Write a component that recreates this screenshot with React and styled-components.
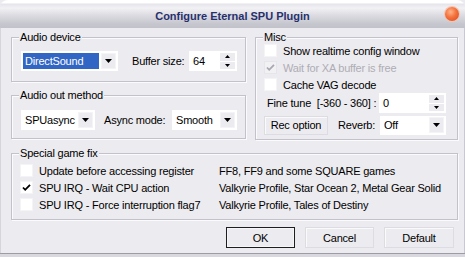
import { createGlobalStyle, styled } from "styled-components";

const Global = createGlobalStyle`
    html, body {
        margin: 0;
        padding: 0;
        background: #ffffff;
    }
    * {
        box-sizing: border-box;
    }
`

const Window = styled.div`
    width: 465px;
    height: 257px;
    display: flex;
    flex-direction: column;
    background: #ecebef;
    font-family: "Liberation Sans", Arial, sans-serif;
    font-size: 11px;
    letter-spacing: -0.2px;
    color: #000;
    overflow: hidden;
`

const TitleBar = styled.div`
    height: 28px;
    display: flex;
    align-items: center;
    justify-content: center;
    position: relative;
    padding-top: 3px;
    background: linear-gradient(#ffffff 0px, #ffffff 3px, #e4e4ea 4px, #f2f2f5 8px, #dcdce2 15px, #c6c6ce 24px, #c2c2ca 28px);
    border-radius: 8px 8px 0 0;
`

const Title = styled.span`
    font-weight: bold;
    color: #27306c;
    letter-spacing: 0;
`

const CloseButton = styled.span`
    position: absolute;
    right: 6px;
    top: 7px;
    width: 14px;
    height: 14px;
    border-radius: 50%;
    background: radial-gradient(circle at 40% 35%, #ffb48a 0%, #f3713c 45%, #d9461a 100%);
    box-shadow: 0 0 0 1px #f4c4b0;
`

const Body = styled.div`
    flex: 1;
    display: flex;
    flex-direction: column;
    padding: 9px 7px 0 11px;
    border-bottom: 1px solid #9d9ca6;
    box-shadow: inset 1px 0 0 #d6d5dc, inset -1px 0 0 #c9c8d0;
`

const BottomEdge = styled.div`
    height: 3px;
    background: #d9d8de;
`

const TopRow = styled.div`
    display: flex;
    gap: 9px;
`

const Column = styled.div`
    width: 235px;
    display: flex;
    flex-direction: column;
    gap: 13px;
`

const Group = styled.div`
    position: relative;
    width: ${p => p.$w}px;
    height: ${p => p.$h}px;
    border: 1px solid #c3c2cb;
    box-shadow: inset 1px 1px 0 #fbfbfd, 1px 1px 0 #fbfbfd;
    padding: ${p => p.$pad};
`

const Legend = styled.span`
    position: absolute;
    top: -8px;
    left: 7px;
    padding: 0 1px;
    background: #ecebef;
    line-height: 14px;
`

const Row = styled.div`
    display: flex;
    align-items: center;
    height: ${p => p.$h || 20}px;
    margin-top: ${p => p.$mt || 0}px;
`

const Label = styled.span`
    margin-left: ${p => p.$ml || 0}px;
    white-space: nowrap;
    color: ${p => (p.$disabled ? "#aeadb5" : "#000")};
`

const Combo = styled.div`
    width: ${p => p.$w}px;
    height: ${p => p.$h || 20}px;
    margin-left: ${p => (p.$auto ? "auto" : "0")};
    background: #fff;
    display: flex;
    align-items: center;
    padding: 2px;
    gap: 2px;
`

const ComboText = styled.span`
    flex: 1;
    height: 100%;
    display: flex;
    align-items: center;
    padding-left: 2px;
    background: ${p => (p.$selected ? "#3166c4" : "transparent")};
    color: ${p => (p.$selected ? "#fff" : "#000")};
    white-space: nowrap;
`

const DropButton = styled.span`
    width: 15px;
    height: 16px;
    display: flex;
    align-items: center;
    justify-content: center;
    background: #ecebef;
    border: 1px solid #f4f4f6;
`

const Spin = styled.div`
    width: ${p => p.$w}px;
    height: 20px;
    margin-left: auto;
    background: #fff;
    display: flex;
    align-items: stretch;
    padding: 2px;
`

const SpinText = styled.span`
    flex: 1;
    padding-left: 2px;
    display: flex;
    align-items: center;
`

const SpinArrows = styled.span`
    width: 15px;
    display: flex;
    flex-direction: column;
    gap: 1px;
`

const SpinPart = styled.span`
    flex: 1;
    display: flex;
    align-items: center;
    justify-content: center;
    background: #ecebef;
`

const Box = styled.span`
    width: 13px;
    height: 13px;
    flex: none;
    display: flex;
    align-items: center;
    justify-content: center;
    background: ${p => (p.$disabled ? "#f1f0f3" : "#fff")};
    border: 1px solid ${p => (p.$disabled ? "#e6e5ea" : "#f4f4f6")};
`

const CheckRow = styled.div`
    display: flex;
    align-items: center;
    height: 17px;
    gap: ${p => p.$gap || 6}px;
`

const FixLabel = styled.div`
    width: 193px;
    display: flex;
    align-items: center;
    gap: 6px;
    white-space: nowrap;
`

const Button = styled.button`
    width: ${p => p.$w}px;
    height: ${p => p.$h || 21}px;
    font: inherit;
    letter-spacing: inherit;
    color: #000;
    background: #ecebef;
    border: 1px solid ${p => (p.$focus ? "#1e1e1e" : "#dddce2")};
    box-shadow: ${p => (p.$focus ? "inset 0 0 0 1px #f6f6f8" : "inset 1px 1px 0 #fafafb")};
    padding: 0;
`

const ButtonRow = styled.div`
    display: flex;
    justify-content: flex-end;
    gap: 10px;
    margin-top: 7px;
    padding-right: 4px;
`

const Down = () => (
    <svg width="7" height="4" viewBox="0 0 7 4"><path d="M0 0h7L3.5 4z" fill="#000" /></svg>
)

const Up = () => (
    <svg width="5" height="3" viewBox="0 0 5 3"><path d="M0 3h5L2.5 0z" fill="#000" /></svg>
)

const SmallDown = () => (
    <svg width="5" height="3" viewBox="0 0 5 3"><path d="M0 0h5L2.5 3z" fill="#000" /></svg>
)

const Check = ({ color }) => (
    <svg width="9" height="9" viewBox="0 0 9 9">
        <path d="M1 4.5l2.2 2.3L8 1.8" stroke={color} strokeWidth="1.8" fill="none" />
    </svg>
)

const Checkbox = ({ checked, disabled }) => (
    <Box $disabled={disabled}>
        {checked && <Check color={disabled ? "#a9a8b0" : "#000"} />}
    </Box>
)

const Dropdown = ({ w, value, selected, auto, h }) => (
    <Combo $w={w} $auto={auto} $h={h}>
        <ComboText $selected={selected}>{value}</ComboText>
        <DropButton><Down /></DropButton>
    </Combo>
)

const SpinBox = ({ w, value }) => (
    <Spin $w={w}>
        <SpinText>{value}</SpinText>
        <SpinArrows>
            <SpinPart><Up /></SpinPart>
            <SpinPart><SmallDown /></SpinPart>
        </SpinArrows>
    </Spin>
)

const fixes = [
    { label: "Update before accessing register", games: "FF8, FF9 and some SQUARE games", checked: false },
    { label: "SPU IRQ - Wait CPU action", games: "Valkyrie Profile, Star Ocean 2, Metal Gear Solid", checked: true },
    { label: "SPU IRQ - Force interruption flag7", games: "Valkyrie Profile, Tales of Destiny", checked: false },
]

export default function App() {
    return (
        <>
            <Global />
            <Window>
                <TitleBar>
                    <Title>Configure Eternal SPU Plugin</Title>
                    <CloseButton />
                </TitleBar>

                <Body>
                    <TopRow>
                        <Column>
                            <Group $w={235} $h={45} $pad="13px 8px 0 9px">
                                <Legend>Audio device</Legend>
                                <Row>
                                    <Dropdown w={97} value="DirectSound" selected />
                                    <Label $ml={14}>Buffer size:</Label>
                                    <SpinBox w={48} value="64" />
                                </Row>
                            </Group>

                            <Group $w={235} $h={44} $pad="14px 8px 0 9px">
                                <Legend>Audio out method</Legend>
                                <Row>
                                    <Dropdown w={74} value="SPUasync" />
                                    <Label $ml={9}>Async mode:</Label>
                                    <Dropdown w={65} value="Smooth" auto />
                                </Row>
                            </Group>
                        </Column>

                        <Group $w={203} $h={103} $pad="4px 11px 0 8px">
                            <Legend>Misc</Legend>
                            <CheckRow>
                                <Checkbox />
                                <Label>Show realtime config window</Label>
                            </CheckRow>
                            <CheckRow>
                                <Checkbox checked disabled />
                                <Label $disabled>Wait for XA buffer is free</Label>
                            </CheckRow>
                            <CheckRow>
                                <Checkbox />
                                <Label>Cache VAG decode</Label>
                            </CheckRow>
                            <Row>
                                <Label $ml={3}>Fine tune&nbsp; [-360 - 360] :</Label>
                                <SpinBox w={67} value="0" />
                            </Row>
                            <Row $mt={2}>
                                <Button $w={64} $h={19}>Rec option</Button>
                                <Label $ml={10}>Reverb:</Label>
                                <Dropdown w={66} value="Off" auto h={19} />
                            </Row>
                        </Group>
                    </TopRow>

                    <Group $w={447} $h={67} $pad="8px 8px 0 8px" style={{ marginTop: 13 }}>
                        <Legend>Special game fix</Legend>
                        {fixes.map(f => (
                            <CheckRow key={f.label} $gap={0}>
                                <FixLabel>
                                    <Checkbox checked={f.checked} />
                                    <span>{f.label}</span>
                                </FixLabel>
                                <Label>{f.games}</Label>
                            </CheckRow>
                        ))}
                    </Group>

                    <ButtonRow>
                        <Button $w={69} $focus>OK</Button>
                        <Button $w={69}>Cancel</Button>
                        <Button $w={70}>Default</Button>
                    </ButtonRow>
                </Body>
                <BottomEdge />
            </Window>
        </>
    )
}
